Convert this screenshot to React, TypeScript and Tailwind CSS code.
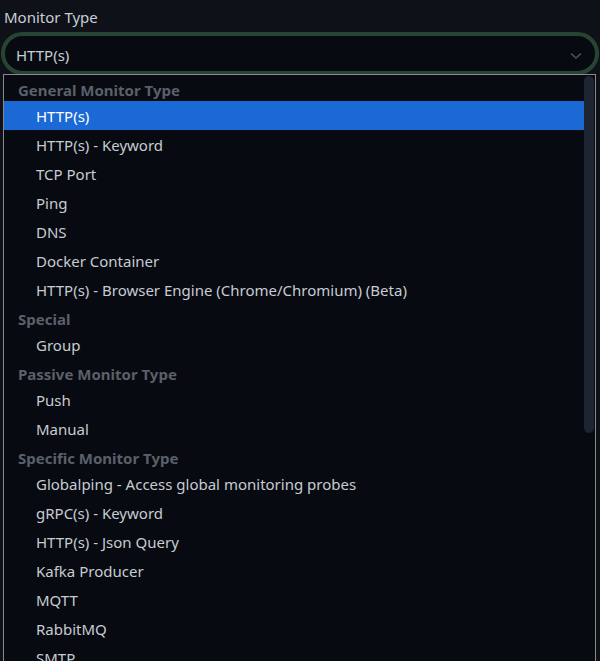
import React from "react";

type Item = { kind: "h" | "o"; label: string; selected?: boolean };

const items: Item[] = [
  { kind: "h", label: "General Monitor Type" },
  { kind: "o", label: "HTTP(s)", selected: true },
  { kind: "o", label: "HTTP(s) - Keyword" },
  { kind: "o", label: "TCP Port" },
  { kind: "o", label: "Ping" },
  { kind: "o", label: "DNS" },
  { kind: "o", label: "Docker Container" },
  { kind: "o", label: "HTTP(s) - Browser Engine (Chrome/Chromium) (Beta)" },
  { kind: "h", label: "Special" },
  { kind: "o", label: "Group" },
  { kind: "h", label: "Passive Monitor Type" },
  { kind: "o", label: "Push" },
  { kind: "o", label: "Manual" },
  { kind: "h", label: "Specific Monitor Type" },
  { kind: "o", label: "Globalping - Access global monitoring probes" },
  { kind: "o", label: "gRPC(s) - Keyword" },
  { kind: "o", label: "HTTP(s) - Json Query" },
  { kind: "o", label: "Kafka Producer" },
  { kind: "o", label: "MQTT" },
  { kind: "o", label: "RabbitMQ" },
  { kind: "o", label: "SMTP" },
  { kind: "o", label: "SNMP" },
];

export default function App() {
  return (
    <div
      className="relative w-[600px] h-[661px] overflow-hidden bg-[#0e1118] text-[15px]"
      style={{ fontFamily: '"Noto Sans", "Open Sans", sans-serif' }}
    >
      <div className="pt-[6px] pl-[4px] h-[32px] leading-[22px] text-[#c9ced6]">Monitor Type</div>
      <div className="mx-[1px] w-[598px] h-[43px] rounded-full border-4 border-[#274533] bg-[#070a10] flex items-center pl-[11px] pr-[13px]">
        <span className="flex-1 pt-[3px] text-[#c9ced6]">HTTP(s)</span>
        <svg width="12" height="8" viewBox="0 0 12 8" fill="none" className="mt-[4px]">
          <path d="M1 1.5 L6 6 L11 1.5" stroke="#4a505b" strokeWidth="1.6" />
        </svg>
      </div>
      <div className="absolute left-[3px] top-[74px] w-[593px] h-[620px] border border-[#8a8a8a] bg-[#070a10] flex">
        <div className="flex-1 flex flex-col">
          {items.map((it, i) =>
            it.kind === "h" ? (
              <div key={i} className="h-[26px] shrink-0 pt-[1px] leading-[29px] pl-[14px] font-bold text-[#5a606a] whitespace-nowrap">
                {it.label}
              </div>
            ) : (
              <div
                key={i}
                className={
                  it.selected
                    ? "h-[29px] shrink-0 pt-[1px] leading-[29px] pl-[32px] bg-[#1a69d4] text-white whitespace-nowrap"
                    : "h-[29px] shrink-0 pt-[1px] leading-[29px] pl-[32px] text-[#c8ccd3] whitespace-nowrap"
                }
              >
                {it.label}
              </div>
            )
          )}
        </div>
        <div className="w-[11px] pt-[1px]">
          <div className="w-[10px] h-[357px] rounded-full bg-[#1e2532]" />
        </div>
      </div>
    </div>
  );
}
